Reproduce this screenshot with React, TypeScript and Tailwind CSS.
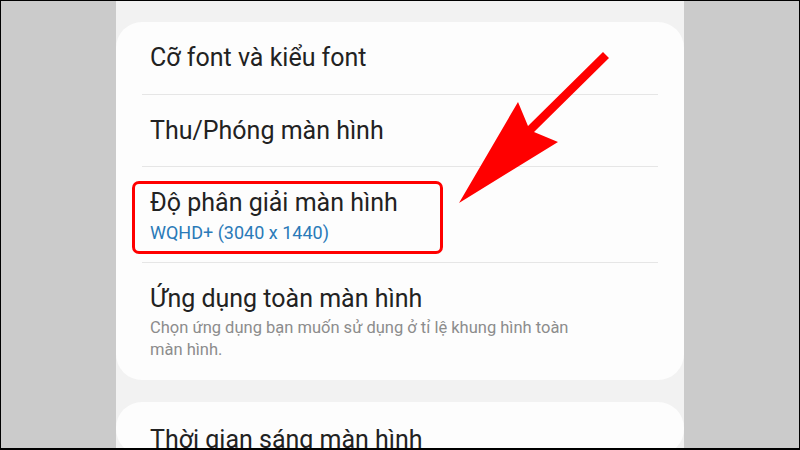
export default function App() {
  const font = { fontFamily: 'Roboto, "Noto Sans", sans-serif' };

  return (
    <div
      className="relative flex h-[450px] w-[800px] overflow-hidden border border-b-2 border-black bg-[#cbcbcb]"
      style={font}
    >
      {/* Left gutter */}
      <div className="w-[115px] shrink-0" />

      {/* Phone screen */}
      <div className="flex w-[568px] shrink-0 flex-col gap-[22px] bg-[#f2f2f2] pt-[21px]">
        <div className="rounded-[26px] bg-[#fdfdfd]">
          <div className="flex h-[72px] items-center pl-[34px] text-[25px] text-[#222]">
            Cỡ font và kiểu font
          </div>
          <div className="mx-[26px] h-px bg-[#e6e6e6]" />
          <div className="flex h-[71px] items-center pl-[34px] text-[25px] text-[#222]">
            Thu/Phóng màn hình
          </div>
          <div className="mx-[26px] h-px bg-[#e6e6e6]" />
          <div className="pl-[34px] pt-[21px] pb-[17px]">
            <p className="text-[25px] leading-[30px] text-[#222]">Độ phân giải màn hình</p>
            <p className="mt-[3px] text-[18px] leading-[24px] text-[#2a7ab8]">WQHD+ (3040 x 1440)</p>
          </div>
          <div className="mx-[26px] h-px bg-[#e6e6e6]" />
          <div className="pl-[34px] pr-[84px] pt-[21px] pb-[19px]">
            <p className="text-[25px] leading-[30px] text-[#222]">Ứng dụng toàn màn hình</p>
            <p className="mt-[3px] text-[16.5px] leading-[22px] text-[#8c8c8c]">
              Chọn ứng dụng bạn muốn sử dụng ở tỉ lệ khung hình toàn màn hình.
            </p>
          </div>
        </div>

        <div className="h-[80px] rounded-[26px] bg-[#fdfdfd] pl-[34px] pt-[23px]">
          <p className="text-[25px] leading-[30px] text-[#222]">Thời gian sáng màn hình</p>
        </div>
      </div>

      {/* Highlight box */}
      <div className="absolute left-[131px] top-[180px] h-[73px] w-[311px] rounded-[7px] border-[3px] border-[#f00]" />

      {/* Arrow */}
      <svg className="absolute left-0 top-0" width="800" height="450" viewBox="0 0 800 450">
        <polygon
          fill="#ff0000"
          points="602,51 527,125 517,101 458,202 557,141 533,131 608,57"
        />
      </svg>
    </div>
  );
}
